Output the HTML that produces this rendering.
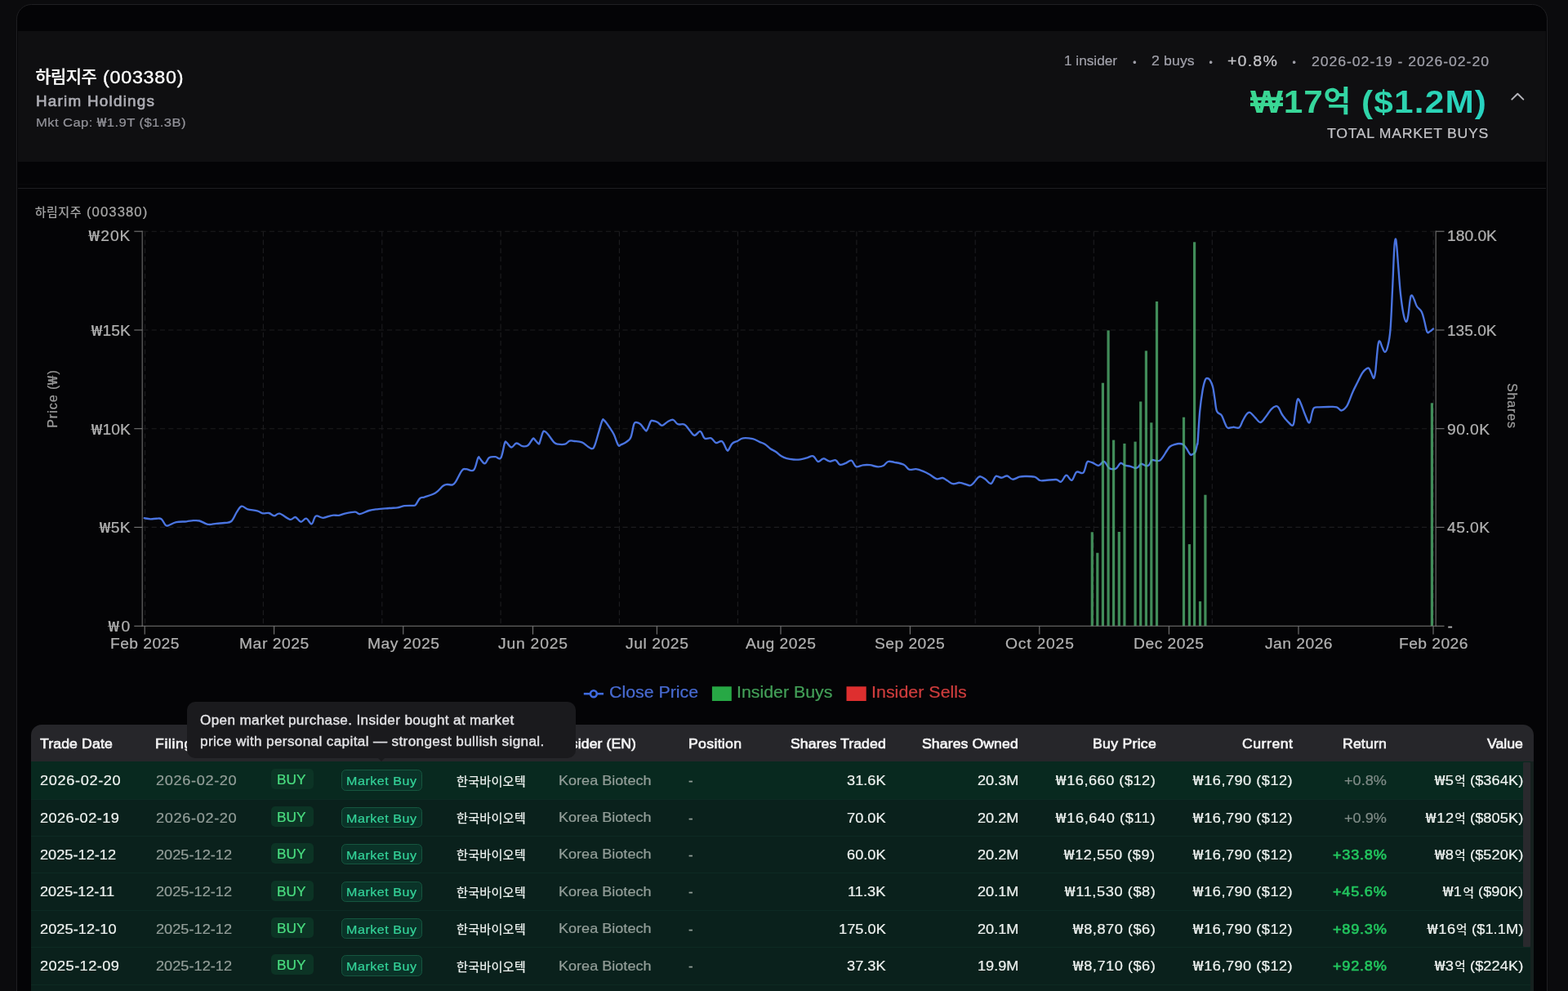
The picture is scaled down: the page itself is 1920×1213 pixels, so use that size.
<!DOCTYPE html>
<html lang="ko">
<head>
<meta charset="utf-8">
<title>하림지주 (003380) — Harim Holdings insider trades</title>
<style>
:root{--kr:"Noto Sans CJK KR","NanumGothic",sans-serif}
*{box-sizing:border-box;margin:0;padding:0}
html,body{width:1920px;height:1213px;overflow:hidden;background:#0b0b0d}
body{position:relative;font-family:"Liberation Sans","Noto Sans CJK KR",sans-serif;-webkit-font-smoothing:antialiased}
.card{position:absolute;left:20.3px;top:4.5px;width:1874.3px;height:1400px;border:1.4px solid #1f1f22;border-radius:18.5px;background:#040406}
.band{position:absolute;left:21.7px;top:38.4px;width:1871.5px;height:160px;background:#0f0f11}
.rule{position:absolute;left:21.7px;top:230px;width:1871.5px;height:1px;background:#1e1e21}
.rule2{position:absolute;left:21.7px;top:225px;width:1871.5px;height:1px;background:#08080a}
.chart{position:absolute;left:0;top:0}
.t{position:absolute;white-space:pre;line-height:1;-webkit-text-stroke:0.22px currentColor;transform-origin:0 0}
.w{font-family:var(--kr);display:inline-block;transform:scaleX(1.26);margin:0 .072em}
.txt{position:absolute;left:0;top:0;width:1920px;height:1213px;will-change:transform}
.chev{position:absolute;left:1846px;top:108px}
.g1,.g2,.g3{-webkit-background-clip:text;background-clip:text;-webkit-text-fill-color:transparent;padding:8px 0;margin-top:-8px}
.g1{background-image:linear-gradient(90deg,#3bd891,#35d69d)}
.g2{background-image:linear-gradient(90deg,#35d69d,#31d5a6)}
.g3{background-image:linear-gradient(90deg,#30d5a8,#27d3c2)}
.tbl{position:absolute;left:38.2px;top:887.2px;width:1839.4px;height:400px;border-radius:13px 13px 0 0;background:#26262a;overflow:hidden}
.row{position:absolute;left:0;width:100%;height:45.4px;background:#0a211c;border-top:1px solid #0d2a23}
.row.r0{background:#08291f;border-top:0}
.sb{position:absolute;left:1865.4px;top:933px;width:8.4px;height:226.4px;background:#29292d;border-radius:1px}
.edge{position:absolute;left:1873.8px;top:932.2px;width:3.8px;height:300px;background:#16211f}
.bb{position:absolute;left:331.6px;width:52px;height:25px;border-radius:5px;background:#0c3425}
.mb{position:absolute;left:418px;width:99.4px;height:25.2px;border-radius:5.5px;background:#0a3328;border:1.1px solid #15563f}
.tip{position:absolute;left:228.8px;top:858.9px;width:476.4px;height:68.8px;border-radius:10px;background:#1a1a1d}
.tip:after{content:"";position:absolute;left:233.2px;top:68.6px;border:5.4px solid transparent;border-top:5.6px solid #1a1a1d;border-bottom:0}
</style>
</head>
<body>
<div class="card"></div>
<div class="band"></div>
<div class="rule2"></div>
<div class="rule"></div>
<svg class="chart" width="1920" height="860" viewBox="0 0 1920 860">
<g stroke="#1c1c1f" stroke-width="1.15" stroke-dasharray="6.2 4.1" fill="none">
<path d="M175.3,283.2H1757.2"/>
<path d="M175.3,404.0H1757.2"/>
<path d="M175.3,524.7H1757.2"/>
<path d="M175.3,645.4H1757.2"/>
<path d="M177.6,283.2V766.3"/>
<path d="M322.4,283.2V766.3"/>
<path d="M467.8,283.2V766.3"/>
<path d="M613.1,283.2V766.3"/>
<path d="M758.4,283.2V766.3"/>
<path d="M903.4,283.2V766.3"/>
<path d="M1048.9,283.2V766.3"/>
<path d="M1194.2,283.2V766.3"/>
<path d="M1339.3,283.2V766.3"/>
<path d="M1484.3,283.2V766.3"/>
<path d="M1755.2,283.2V766.3"/>
</g>
<path d="M176.7,634.2C178.1,634.4 181.4,635.2 184.2,635.3C186.9,635.4 189.3,634.7 191.7,634.7C194.1,634.7 195.5,633.9 197.5,635.3C199.5,636.7 201.0,641.0 202.5,642.5C204.0,644.0 203.4,643.9 205.8,643.3C208.2,642.7 211.7,640.1 215.8,639.2C219.9,638.3 224.5,638.7 228.3,638.3C232.1,637.9 233.8,637.3 236.7,637.2C239.6,637.1 241.4,636.8 244.2,637.5C246.9,638.2 249.4,640.0 251.7,640.8C254.0,641.6 254.3,642.0 256.7,642.0C259.1,642.0 261.6,641.2 265.0,640.8C268.4,640.4 271.6,640.5 275.0,640.0C278.4,639.5 280.6,640.4 283.3,638.0C286.1,635.6 287.7,630.1 290.0,626.7C292.3,623.3 293.4,620.3 295.8,619.7C298.2,619.1 299.8,622.3 303.3,623.3C306.8,624.3 311.6,624.4 315.0,625.3C318.4,626.2 319.1,627.8 321.7,628.3C324.3,628.8 326.6,627.5 329.2,628.0C331.8,628.5 333.4,631.2 335.8,631.3C338.2,631.4 339.0,627.9 342.5,628.7C346.0,629.5 351.5,635.0 355.0,635.8C358.5,636.6 359.3,632.5 361.7,633.0C364.1,633.5 365.9,638.4 368.3,638.7C370.7,639.0 372.5,634.2 375.0,634.7C377.5,635.2 379.6,641.8 381.7,641.3C383.8,640.8 384.1,633.1 386.7,631.7C389.3,630.3 392.1,634.0 395.8,633.8C399.5,633.6 403.2,631.3 406.7,630.8C410.2,630.2 412.0,631.3 415.0,630.8C418.0,630.3 419.6,629.1 423.3,628.3C427.0,627.5 431.8,626.5 435.0,626.7C438.2,626.9 437.7,629.5 440.8,629.2C443.9,628.9 447.9,626.1 451.7,625.0C455.5,623.9 457.1,623.8 461.7,623.3C466.3,622.8 472.1,622.4 476.7,622.0C481.3,621.6 483.3,621.8 486.7,621.3C490.1,620.8 491.3,619.7 495.0,619.2C498.7,618.7 504.1,619.1 506.7,618.8C509.3,618.5 507.8,619.1 509.2,617.5C510.6,615.9 512.2,611.7 514.2,610.0C516.2,608.3 516.5,609.5 520.0,608.3C523.5,607.1 529.2,605.8 533.3,603.3C537.4,600.8 539.9,596.6 542.5,594.7C545.1,592.8 545.4,593.3 547.5,593.0C549.6,592.7 552.2,594.0 554.2,593.3C556.2,592.6 556.2,592.4 558.3,589.2C560.4,586.0 563.5,578.5 565.8,575.8C568.1,573.0 568.2,574.3 570.8,574.2C573.4,574.1 577.3,577.8 580.0,575.3C582.7,572.8 583.9,563.1 585.3,560.5C586.7,557.9 586.2,560.0 587.5,561.2C588.8,562.4 591.1,566.1 592.5,567.0C593.9,567.9 593.8,567.6 595.0,566.3C596.2,565.0 597.1,561.3 599.2,560.0C601.3,558.7 604.1,559.1 606.7,559.2C609.3,559.3 611.2,563.4 613.3,560.3C615.4,557.2 616.7,545.9 618.0,542.5C619.3,539.1 618.8,540.8 620.3,541.7C621.8,542.6 624.1,547.4 626.3,547.5C628.5,547.6 630.0,542.7 632.5,542.5C635.0,542.3 637.4,545.7 640.0,546.2C642.6,546.7 644.4,546.7 646.7,545.0C649.0,543.3 651.0,538.2 652.5,537.0C654.0,535.8 653.8,537.2 655.0,538.3C656.2,539.4 658.1,542.4 659.2,543.0C660.3,543.6 659.8,544.2 660.8,541.7C661.8,539.2 663.5,531.7 664.7,529.2C665.9,526.7 666.2,527.7 667.5,528.3C668.8,528.9 669.7,530.1 671.7,532.5C673.7,534.9 676.2,539.2 678.3,541.3C680.4,543.4 680.8,543.3 683.3,543.7C685.8,544.1 689.1,544.4 691.7,543.7C694.3,543.0 695.4,540.4 697.5,539.7C699.6,539.0 700.5,539.7 703.3,540.0C706.0,540.3 709.4,540.1 712.5,541.3C715.6,542.5 717.7,545.3 720.0,546.7C722.3,548.1 723.5,549.5 725.0,549.2C726.5,548.9 726.8,548.8 728.3,545.0C729.8,541.2 731.6,533.9 733.3,528.3C735.0,522.7 736.3,517.2 737.5,514.7C738.7,512.2 738.3,513.1 740.0,514.7C741.7,516.4 744.6,520.6 746.7,523.7C748.8,526.8 749.8,527.9 751.7,531.7C753.6,535.6 755.3,542.4 757.0,544.7C758.7,547.0 758.7,545.1 760.8,544.2C762.9,543.3 766.2,541.7 768.3,540.0C770.4,538.3 771.0,538.8 772.5,535.0C774.0,531.2 775.1,522.5 776.3,519.2C777.5,515.9 777.8,517.0 779.2,517.0C780.6,517.0 782.2,517.4 784.2,519.2C786.2,521.0 788.8,525.5 790.3,526.7C791.8,527.9 791.3,527.8 792.5,525.8C793.7,523.8 795.5,517.8 796.7,515.8C797.9,513.8 797.7,514.8 799.2,515.0C800.7,515.2 802.9,515.6 805.0,516.7C807.1,517.8 808.5,520.9 810.8,520.8C813.1,520.7 815.0,517.6 817.5,516.3C820.0,515.0 821.9,513.3 824.2,513.8C826.5,514.3 827.4,518.1 830.0,519.2C832.6,520.3 835.5,518.2 838.3,519.7C841.0,521.2 842.8,525.1 845.0,527.5C847.2,529.9 848.2,532.9 850.3,533.0C852.4,533.1 855.1,528.5 856.7,528.0C858.3,527.5 858.0,528.4 859.2,530.0C860.4,531.6 860.9,535.5 863.0,536.7C865.1,537.9 868.3,535.3 870.8,536.3C873.3,537.3 874.2,541.3 876.7,542.0C879.2,542.7 881.8,538.7 884.2,540.3C886.6,541.9 888.5,549.0 890.0,550.8C891.5,552.6 891.3,551.5 892.5,550.0C893.7,548.5 894.7,544.7 896.7,542.8C898.7,540.9 900.9,540.9 903.3,539.7C905.7,538.5 906.6,536.8 910.0,536.3C913.4,535.8 918.0,536.4 921.7,537.2C925.4,538.0 927.2,539.6 930.0,540.8C932.8,542.0 934.3,542.3 936.7,543.8C939.1,545.3 940.9,547.5 943.3,549.2C945.7,550.9 947.5,551.3 950.0,553.0C952.5,554.7 954.3,556.8 956.7,558.3C959.1,559.8 960.5,560.4 963.3,561.2C966.0,562.0 968.6,562.3 971.7,562.5C974.8,562.7 977.0,562.7 980.0,562.3C983.0,561.9 985.4,561.0 988.3,560.3C991.2,559.6 993.3,557.4 995.8,558.3C998.3,559.2 999.4,564.5 1001.7,565.0C1004.0,565.5 1005.7,561.4 1008.3,561.3C1010.9,561.2 1013.0,564.3 1015.8,564.7C1018.5,565.1 1021.0,562.6 1023.3,563.3C1025.6,564.0 1026.2,568.0 1028.3,568.7C1030.4,569.4 1032.4,568.1 1035.0,567.2C1037.6,566.3 1040.1,563.0 1042.5,563.7C1044.9,564.4 1045.7,570.2 1048.3,571.2C1050.9,572.2 1053.6,569.7 1056.7,569.3C1059.8,568.9 1061.6,568.8 1065.0,569.2C1068.4,569.6 1071.9,571.2 1075.0,571.3C1078.1,571.4 1079.4,571.2 1081.7,570.0C1084.0,568.8 1085.1,565.8 1087.5,565.0C1089.9,564.2 1091.5,565.1 1095.0,565.8C1098.5,566.5 1103.3,567.1 1106.7,568.7C1110.1,570.3 1110.5,573.7 1113.3,574.7C1116.0,575.7 1118.6,573.8 1121.7,574.2C1124.8,574.6 1127.0,575.5 1130.0,576.7C1133.0,577.9 1135.2,579.1 1138.3,580.8C1141.4,582.5 1143.8,585.4 1146.7,586.2C1149.6,587.0 1151.8,584.6 1154.2,585.0C1156.6,585.4 1157.7,587.0 1160.0,588.3C1162.3,589.6 1164.0,591.7 1166.7,592.2C1169.5,592.7 1172.2,590.7 1175.0,590.8C1177.8,590.9 1179.4,591.9 1181.7,592.5C1184.0,593.1 1185.7,594.4 1187.5,594.3C1189.3,594.2 1189.9,593.5 1191.7,591.7C1193.5,589.9 1195.8,586.2 1197.5,584.7C1199.2,583.2 1199.1,582.9 1200.8,583.3C1202.5,583.7 1204.4,585.1 1206.7,586.7C1209.0,588.3 1211.2,592.5 1213.3,592.0C1215.4,591.5 1216.9,585.9 1218.3,584.2C1219.7,582.5 1219.3,582.7 1220.8,582.8C1222.3,582.9 1224.4,584.8 1226.7,584.7C1229.0,584.6 1230.9,582.1 1233.3,582.5C1235.7,582.9 1237.2,586.5 1240.0,586.7C1242.8,586.9 1245.5,584.4 1248.3,583.7C1251.0,583.0 1251.6,583.0 1255.0,583.0C1258.4,583.0 1263.3,582.8 1266.7,583.7C1270.1,584.6 1270.9,587.2 1273.3,588.0C1275.7,588.8 1276.3,588.2 1280.0,588.0C1283.7,587.8 1289.8,586.7 1293.3,587.0C1296.8,587.3 1297.2,590.5 1299.2,589.7C1301.2,588.9 1302.8,584.2 1304.2,582.8C1305.6,581.4 1305.2,581.1 1306.7,582.0C1308.2,582.9 1310.4,588.6 1312.5,587.8C1314.6,587.0 1315.8,579.5 1318.3,577.8C1320.8,576.1 1324.1,580.8 1326.4,578.7C1328.7,576.6 1329.5,568.6 1330.9,566.1C1332.3,563.6 1332.5,565.0 1333.9,565.1C1335.3,565.2 1336.7,565.9 1338.8,566.8C1340.9,567.7 1343.0,570.1 1345.2,569.8C1347.4,569.5 1349.2,566.0 1350.7,565.3C1352.2,564.6 1351.8,564.4 1353.2,565.8C1354.6,567.2 1356.2,571.5 1358.1,573.0C1360.0,574.5 1361.9,574.2 1363.5,574.2C1365.1,574.2 1365.5,574.5 1367.0,573.2C1368.5,571.9 1370.2,568.4 1371.5,567.3C1372.8,566.2 1372.8,566.9 1373.9,567.3C1375.0,567.7 1375.5,569.0 1377.4,569.6C1379.3,570.2 1381.9,570.2 1384.3,570.8C1386.7,571.4 1388.5,572.9 1390.3,573.0C1392.1,573.1 1392.9,572.2 1394.2,571.2C1395.5,570.2 1395.5,568.0 1397.2,567.8C1398.9,567.6 1401.8,570.1 1403.6,570.3C1405.4,570.5 1405.8,570.1 1407.1,568.8C1408.4,567.5 1409.1,564.2 1410.5,563.3C1411.9,562.4 1413.3,563.7 1415.0,563.8C1416.7,563.9 1418.3,564.6 1419.9,563.8C1421.5,563.0 1422.2,561.7 1423.9,559.4C1425.6,557.1 1427.3,553.9 1428.9,551.5C1430.5,549.1 1431.0,547.9 1432.8,546.5C1434.6,545.1 1436.7,544.6 1438.7,544.0C1440.7,543.4 1441.9,543.0 1443.7,543.0C1445.5,543.0 1447.0,543.0 1448.6,544.0C1450.2,545.0 1451.0,546.3 1452.6,548.5C1454.2,550.7 1455.8,554.5 1457.1,555.9C1458.4,557.3 1458.3,556.9 1459.5,556.4C1460.7,555.9 1462.3,555.8 1463.5,553.4C1464.7,551.0 1465.4,546.0 1466.0,543.5C1466.6,541.0 1466.1,547.4 1466.7,540.0C1467.3,532.6 1468.1,514.6 1469.2,503.3C1470.3,492.0 1471.3,485.3 1472.5,478.3C1473.7,471.3 1474.7,467.8 1475.8,465.0C1476.9,462.2 1477.2,462.9 1478.3,463.0C1479.4,463.1 1480.5,463.4 1481.7,465.3C1482.9,467.2 1483.9,469.1 1485.0,473.3C1486.1,477.5 1486.6,482.8 1487.5,488.3C1488.4,493.8 1488.5,499.6 1490.0,503.3C1491.5,507.0 1494.0,505.6 1495.8,508.3C1497.6,511.1 1498.6,515.5 1500.0,518.3C1501.4,521.1 1501.5,523.0 1503.3,523.8C1505.1,524.6 1507.4,522.9 1510.0,522.8C1512.6,522.7 1515.4,524.7 1517.5,523.3C1519.6,521.9 1520.0,518.0 1521.7,515.0C1523.4,512.0 1525.0,508.5 1526.7,506.7C1528.4,504.9 1529.0,504.2 1530.8,505.0C1532.6,505.8 1534.4,508.6 1536.7,510.8C1539.0,513.0 1540.9,517.1 1543.3,517.0C1545.7,516.9 1547.5,513.0 1550.0,510.0C1552.5,507.0 1554.4,503.1 1556.7,500.8C1559.0,498.5 1560.8,497.5 1562.5,497.2C1564.2,496.9 1564.4,497.3 1565.8,499.2C1567.2,501.1 1568.0,504.5 1570.0,507.5C1572.0,510.5 1574.3,513.5 1576.7,515.8C1579.1,518.1 1581.6,522.0 1583.3,520.3C1585.0,518.6 1584.9,512.1 1585.8,506.7C1586.7,501.3 1587.5,494.1 1588.3,490.8C1589.1,487.5 1589.4,488.0 1590.3,488.8C1591.2,489.6 1591.8,491.4 1593.3,495.0C1594.8,498.6 1596.5,504.2 1598.3,508.3C1600.1,512.4 1601.8,518.1 1603.3,517.5C1604.8,516.9 1605.6,508.4 1606.7,505.0C1607.8,501.6 1607.7,500.4 1609.2,499.2C1610.7,498.0 1611.8,498.5 1615.0,498.3C1618.2,498.1 1622.7,498.0 1626.7,498.0C1630.7,498.0 1633.8,497.5 1636.7,498.3C1639.6,499.1 1640.4,502.5 1642.5,502.5C1644.6,502.5 1646.6,500.3 1648.3,498.3C1650.0,496.3 1650.2,495.2 1651.7,491.7C1653.2,488.2 1654.7,483.6 1656.7,479.2C1658.7,474.8 1660.4,471.7 1662.5,467.5C1664.6,463.3 1666.3,459.3 1668.3,456.3C1670.3,453.3 1671.8,452.3 1673.3,451.3C1674.8,450.3 1675.2,449.8 1676.3,450.8C1677.4,451.8 1678.1,454.5 1679.2,456.7C1680.3,458.9 1681.3,463.3 1682.2,463.0C1683.1,462.7 1683.7,458.0 1684.2,455.0C1684.7,452.0 1684.4,452.8 1685.0,446.7C1685.6,440.6 1686.6,427.0 1687.5,421.7C1688.4,416.4 1688.8,417.4 1689.7,418.0C1690.6,418.6 1691.4,422.7 1692.5,425.0C1693.6,427.3 1694.6,430.9 1695.8,430.8C1697.0,430.7 1698.0,429.2 1699.2,424.2C1700.4,419.2 1701.4,416.0 1702.5,403.3C1703.6,390.6 1704.1,373.0 1705.0,355.0C1705.9,337.0 1706.5,316.5 1707.2,305.0C1707.9,293.5 1708.1,293.1 1708.7,292.5C1709.3,291.9 1709.6,294.8 1710.3,301.7C1711.0,308.6 1711.6,319.3 1712.5,330.0C1713.4,340.7 1713.9,350.2 1715.0,360.0C1716.1,369.8 1717.1,377.1 1718.3,383.3C1719.5,389.5 1720.6,393.1 1721.7,393.7C1722.8,394.3 1723.3,391.6 1724.2,386.7C1725.1,381.8 1725.9,371.4 1726.7,366.7C1727.5,362.0 1727.8,361.3 1728.7,361.3C1729.6,361.3 1730.5,364.2 1731.7,366.7C1732.9,369.2 1733.3,372.2 1735.0,375.0C1736.7,377.8 1739.1,378.3 1740.8,381.7C1742.5,385.1 1743.0,388.8 1744.2,393.3C1745.4,397.8 1746.3,404.0 1747.5,406.3C1748.7,408.6 1749.4,406.5 1750.8,405.8C1752.2,405.1 1754.2,403.1 1755.0,402.5" fill="none" stroke="#4a74e0" stroke-width="2.35" stroke-linejoin="round" stroke-linecap="round"/>
<g fill="#56b975" fill-opacity="0.75">
<rect x="1335.7" y="651.3" width="3.2" height="115.0"/>
<rect x="1342.2" y="676.7" width="3.2" height="89.6"/>
<rect x="1348.8" y="468.7" width="3.2" height="297.6"/>
<rect x="1355.5" y="404.4" width="3.2" height="361.9"/>
<rect x="1362.0" y="538.6" width="3.2" height="227.7"/>
<rect x="1368.7" y="651.0" width="3.2" height="115.3"/>
<rect x="1375.3" y="542.9" width="3.2" height="223.4"/>
<rect x="1388.5" y="540.6" width="3.2" height="225.7"/>
<rect x="1395.1" y="491.5" width="3.2" height="274.8"/>
<rect x="1401.8" y="429.4" width="3.2" height="336.9"/>
<rect x="1408.2" y="517.3" width="3.2" height="249.0"/>
<rect x="1414.9" y="369.0" width="3.2" height="397.3"/>
<rect x="1447.9" y="510.7" width="3.2" height="255.6"/>
<rect x="1454.8" y="666.1" width="3.2" height="100.2"/>
<rect x="1461.0" y="296.3" width="3.2" height="470.0"/>
<rect x="1467.9" y="736.1" width="3.2" height="30.2"/>
<rect x="1474.3" y="605.7" width="3.2" height="160.6"/>
<rect x="1751.8" y="493.3" width="3.2" height="273.0"/>
</g>
<g stroke="#505050" stroke-width="1.6" fill="none"><path d="M174.3,282.59999999999997V766.9"/><path d="M1758.2,282.59999999999997V766.9"/></g>
<g stroke="#787878" stroke-width="1.1" fill="none">
<path d="M173.70000000000002,766.3H1758.8"/>
<path d="M164.3,283.2H174.3"/><path d="M1758.2,283.2H1768.5"/>
<path d="M164.3,404.0H174.3"/><path d="M1758.2,404.0H1768.5"/>
<path d="M164.3,524.7H174.3"/><path d="M1758.2,524.7H1768.5"/>
<path d="M164.3,645.4H174.3"/><path d="M1758.2,645.4H1768.5"/>
<path d="M164.3,766.3H174.3"/><path d="M1758.2,766.3H1768.5"/>
<path d="M177.2,766.3V776.5999999999999"/>
<path d="M335.6,766.3V776.5999999999999"/>
<path d="M493.75,766.3V776.5999999999999"/>
<path d="M652.5,766.3V776.5999999999999"/>
<path d="M804.4,766.3V776.5999999999999"/>
<path d="M956,766.3V776.5999999999999"/>
<path d="M1114.4,766.3V776.5999999999999"/>
<path d="M1272.8,766.3V776.5999999999999"/>
<path d="M1431.4,766.3V776.5999999999999"/>
<path d="M1590,766.3V776.5999999999999"/>
<path d="M1755,766.3V776.5999999999999"/>
</g>
<path d="M714.8,849.2H739" stroke="#3f6be0" stroke-width="2.6" fill="none"/><circle cx="726.9" cy="849.2" r="3.9" fill="#050507" stroke="#3f6be0" stroke-width="2.6"/>
<rect x="871.9" y="840.3" width="23.9" height="17.7" fill="#27a845"/>
<rect x="1036.5" y="840.3" width="24.2" height="17.7" fill="#de2f2f"/>
</svg>
<svg class="chev" width="24" height="24" viewBox="0 0 24 24"><path d="M5.3,13.6 L12.3,6.7 L19.3,13.6" fill="none" stroke="#b6b6bc" stroke-width="2" stroke-linecap="round" stroke-linejoin="round"/></svg>
<div class="tbl">
<div class="row r0" style="top:45.0px"></div><div class="row" style="top:90.4px"></div><div class="row" style="top:135.8px"></div><div class="row" style="top:181.2px"></div><div class="row" style="top:226.6px"></div><div class="row" style="top:272.0px"></div><div class="row" style="top:317.4px"></div>
</div>
<div class="edge"></div>
<div class="sb"></div>
<div class="bb" style="top:941.4px"></div><div class="mb" style="top:942.4px"></div><div class="bb" style="top:986.8px"></div><div class="mb" style="top:987.8px"></div><div class="bb" style="top:1032.2px"></div><div class="mb" style="top:1033.2px"></div><div class="bb" style="top:1077.6px"></div><div class="mb" style="top:1078.6px"></div><div class="bb" style="top:1123.0px"></div><div class="mb" style="top:1124.0px"></div><div class="bb" style="top:1168.4px"></div><div class="mb" style="top:1169.4px"></div><div class="bb" style="top:1213.8px"></div><div class="mb" style="top:1214.8px"></div>
<header class="txt">
<span class="t" style="font-size:21px;color:#ffffff;letter-spacing:-0.54px;font-weight:500;font-family:var(--kr);left:43.27px;top:81.82px;">하림지주</span>
<span class="t" style="font-size:21.8px;color:#ffffff;letter-spacing:0.68px;-webkit-text-stroke:0.35px #fff;left:125.90px;top:83.54px;transform:scaleX(1.070);">(003380)</span>
<span class="t" style="font-size:17.6px;color:#adadb4;letter-spacing:1.17px;-webkit-text-stroke:0.62px currentColor;left:43.84px;top:116.00px;transform:scaleX(1.070);">Harim Holdings</span>
<span class="t" style="font-size:15.5px;color:#93939a;letter-spacing:0.40px;left:44.00px;top:141.48px;transform:scaleX(1.070);">Mkt Cap: <span class="w">₩</span>1.9T ($1.3B)</span>
<span class="t" style="font-size:16.5px;color:#a1a1aa;left:1303.23px;top:66.23px;transform:scaleX(1.043);">1 insider</span>
<span class="t" style="font-size:16.5px;color:#a1a1aa;letter-spacing:0.12px;left:1409.77px;top:66.23px;transform:scaleX(1.070);">2 buys</span>
<span class="t" style="font-size:18.3px;color:#c6c6ca;letter-spacing:1.12px;left:1503.16px;top:65.51px;transform:scaleX(1.070);">+0.8%</span>
<span class="t" style="font-size:16.5px;color:#a1a1aa;letter-spacing:0.88px;left:1605.72px;top:66.83px;transform:scaleX(1.070);">2026-02-19 - 2026-02-20</span>
<span class="t" style="font-size:12px;color:#a1a1aa;left:1387.24px;top:70.84px;">•</span>
<span class="t" style="font-size:12px;color:#a1a1aa;left:1480.54px;top:70.84px;">•</span>
<span class="t" style="font-size:12px;color:#a1a1aa;left:1582.54px;top:70.84px;">•</span>
<span class="t g1" style="font-size:39.6px;color:#38d796;letter-spacing:0.77px;font-weight:700;-webkit-text-stroke:0;left:1530.53px;top:104.77px;transform:scaleX(1.070);">₩17</span>
<span class="t g2" style="font-size:36.5px;color:#32d6a3;font-weight:700;-webkit-text-stroke:0;font-family:var(--kr);left:1620.50px;top:103.88px;">억</span>
<span class="t g3" style="font-size:39.6px;color:#2cd4b4;letter-spacing:1.10px;font-weight:700;-webkit-text-stroke:0;left:1667.33px;top:104.77px;transform:scaleX(1.070);">($1.2M)</span>
<span class="t" style="font-size:16.5px;color:#c4c4c8;letter-spacing:0.67px;left:1624.77px;top:155.13px;transform:scaleX(1.070);">TOTAL MARKET BUYS</span>
</header>
<section class="txt" aria-label="Price chart labels">
<span class="t" style="font-size:15px;color:#a8a8a8;letter-spacing:0.50px;font-family:var(--kr);left:42.75px;top:250.80px;">하림지주</span>
<span class="t" style="font-size:15.6px;color:#a8a8a8;letter-spacing:0.99px;left:105.90px;top:252.09px;transform:scaleX(1.070);">(003380)</span>
<span class="t" style="font-size:18px;color:#b2b2b2;letter-spacing:0.85px;left:108.82px;top:278.06px;transform:scaleX(1.070);"><span class="w">₩</span>20K</span>
<span class="t" style="font-size:18px;color:#b2b2b2;letter-spacing:0.01px;left:111.52px;top:394.06px;transform:scaleX(1.070);"><span class="w">₩</span>15K</span>
<span class="t" style="font-size:18px;color:#b2b2b2;letter-spacing:0.01px;left:111.52px;top:515.06px;transform:scaleX(1.070);"><span class="w">₩</span>10K</span>
<span class="t" style="font-size:18px;color:#b2b2b2;letter-spacing:0.25px;left:121.72px;top:635.06px;transform:scaleX(1.070);"><span class="w">₩</span>5K</span>
<span class="t" style="font-size:18px;color:#b2b2b2;letter-spacing:1.96px;left:133.02px;top:756.06px;transform:scaleX(1.070);"><span class="w">₩</span>0</span>
<span class="t" style="font-size:18px;color:#b2b2b2;left:1772.02px;top:280.36px;transform:scaleX(1.068);">180.0K</span>
<span class="t" style="font-size:18px;color:#b2b2b2;left:1772.03px;top:395.76px;transform:scaleX(1.061);">135.0K</span>
<span class="t" style="font-size:18px;color:#b2b2b2;letter-spacing:0.42px;left:1772.02px;top:516.76px;transform:scaleX(1.070);">90.0K</span>
<span class="t" style="font-size:18px;color:#b2b2b2;letter-spacing:0.42px;left:1772.02px;top:636.96px;transform:scaleX(1.070);">45.0K</span>
<span class="t" style="font-size:19px;color:#b2b2b2;left:1772.43px;top:757.21px;">-</span>
<span class="t" style="font-size:18px;color:#b2b2b2;letter-spacing:0.40px;left:134.92px;top:779.46px;transform:scaleX(1.070);">Feb 2025</span>
<span class="t" style="font-size:18px;color:#b2b2b2;letter-spacing:0.53px;left:292.82px;top:779.46px;transform:scaleX(1.070);">Mar 2025</span>
<span class="t" style="font-size:18px;color:#b2b2b2;letter-spacing:0.44px;left:449.72px;top:779.46px;transform:scaleX(1.070);">May 2025</span>
<span class="t" style="font-size:18px;color:#b2b2b2;letter-spacing:0.75px;left:609.97px;top:779.46px;transform:scaleX(1.070);">Jun 2025</span>
<span class="t" style="font-size:18px;color:#b2b2b2;letter-spacing:0.54px;left:765.87px;top:779.46px;transform:scaleX(1.070);">Jul 2025</span>
<span class="t" style="font-size:18px;color:#b2b2b2;letter-spacing:0.46px;left:912.92px;top:779.46px;transform:scaleX(1.070);">Aug 2025</span>
<span class="t" style="font-size:18px;color:#b2b2b2;letter-spacing:0.42px;left:1071.47px;top:779.46px;transform:scaleX(1.070);">Sep 2025</span>
<span class="t" style="font-size:18px;color:#b2b2b2;letter-spacing:0.76px;left:1230.77px;top:779.46px;transform:scaleX(1.070);">Oct 2025</span>
<span class="t" style="font-size:18px;color:#b2b2b2;letter-spacing:0.47px;left:1388.32px;top:779.46px;transform:scaleX(1.070);">Dec 2025</span>
<span class="t" style="font-size:18px;color:#b2b2b2;letter-spacing:0.44px;left:1548.62px;top:779.46px;transform:scaleX(1.070);">Jan 2026</span>
<span class="t" style="font-size:18px;color:#b2b2b2;letter-spacing:0.40px;left:1712.72px;top:779.46px;transform:scaleX(1.070);">Feb 2026</span>
<span class="t" style="font-size:16px;color:#9c9c9c;letter-spacing:1.00px;left:64.0px;top:487.6px;transform-origin:50% 50%;transform:translate(-50%,-50%) rotate(-90deg);">Price (<span class="w">₩</span>)</span>
<span class="t" style="font-size:16px;color:#9c9c9c;letter-spacing:0.85px;left:1850.6px;top:496.8px;transform-origin:50% 50%;transform:translate(-50%,-50%) rotate(90deg);">Shares</span>
<span class="t" style="font-size:20px;color:#486bd2;left:745.76px;top:837.47px;transform:scaleX(1.067);">Close Price</span>
<span class="t" style="font-size:20px;color:#43a058;left:902.36px;top:837.47px;transform:scaleX(1.066);">Insider Buys</span>
<span class="t" style="font-size:20px;color:#cf3d3d;letter-spacing:0.02px;left:1067.36px;top:837.47px;transform:scaleX(1.070);">Insider Sells</span>
</section>
<section class="txt" aria-label="Insider trades table">
<span class="t" style="font-size:16.5px;color:#f4f4f5;letter-spacing:0.11px;-webkit-text-stroke:0.62px currentColor;left:49.47px;top:901.53px;transform:scaleX(1.070);">Trade Date</span>
<span class="t" style="font-size:16.5px;color:#f4f4f5;letter-spacing:0.58px;-webkit-text-stroke:0.62px currentColor;left:190.47px;top:901.53px;transform:scaleX(1.070);">Filing Date</span>
<span class="t" style="font-size:16.5px;color:#f4f4f5;-webkit-text-stroke:0.62px currentColor;left:330.47px;top:901.53px;transform:scaleX(1.063);">Type</span>
<span class="t" style="font-size:16.5px;color:#f4f4f5;letter-spacing:0.19px;-webkit-text-stroke:0.62px currentColor;left:417.47px;top:901.53px;transform:scaleX(1.070);">Category</span>
<span class="t" style="font-size:16.5px;color:#f4f4f5;letter-spacing:0.30px;-webkit-text-stroke:0.62px currentColor;left:558.77px;top:901.53px;transform:scaleX(1.070);">Insider (KR)</span>
<span class="t" style="font-size:16.5px;color:#f4f4f5;letter-spacing:0.07px;-webkit-text-stroke:0.62px currentColor;left:683.77px;top:901.53px;transform:scaleX(1.070);">Insider (EN)</span>
<span class="t" style="font-size:16.5px;color:#f4f4f5;letter-spacing:0.30px;-webkit-text-stroke:0.62px currentColor;left:842.77px;top:901.53px;transform:scaleX(1.070);">Position</span>
<span class="t" style="font-size:16.5px;color:#f4f4f5;letter-spacing:0.07px;-webkit-text-stroke:0.62px currentColor;left:967.77px;top:901.53px;transform:scaleX(1.070);">Shares Traded</span>
<span class="t" style="font-size:16.5px;color:#f4f4f5;letter-spacing:0.08px;-webkit-text-stroke:0.62px currentColor;left:1129.47px;top:901.53px;transform:scaleX(1.070);">Shares Owned</span>
<span class="t" style="font-size:16.5px;color:#f4f4f5;letter-spacing:0.26px;-webkit-text-stroke:0.62px currentColor;left:1337.77px;top:901.53px;transform:scaleX(1.070);">Buy Price</span>
<span class="t" style="font-size:16.5px;color:#f4f4f5;letter-spacing:0.49px;-webkit-text-stroke:0.62px currentColor;left:1521.17px;top:901.53px;transform:scaleX(1.070);">Current</span>
<span class="t" style="font-size:16.5px;color:#f4f4f5;letter-spacing:0.14px;-webkit-text-stroke:0.62px currentColor;left:1644.47px;top:901.53px;transform:scaleX(1.070);">Return</span>
<span class="t" style="font-size:16.5px;color:#f4f4f5;letter-spacing:0.00px;-webkit-text-stroke:0.62px currentColor;left:1821.17px;top:901.53px;transform:scaleX(1.070);">Value</span>
<span class="t" style="font-size:17px;color:#eef2f0;letter-spacing:0.59px;left:49.45px;top:947.21px;transform:scaleX(1.070);">2026-02-20</span>
<span class="t" style="font-size:17px;color:#939e99;letter-spacing:0.59px;left:190.55px;top:947.21px;transform:scaleX(1.070);">2026-02-20</span>
<span class="t" style="font-size:16.5px;color:#4ade80;left:339.48px;top:946.43px;transform:scaleX(1.047);">BUY</span>
<span class="t" style="font-size:15px;color:#34d399;letter-spacing:0.51px;left:424.42px;top:948.10px;transform:scaleX(1.070);">Market Buy</span>
<span class="t" style="font-size:15.2px;color:#eef2f0;letter-spacing:0.17px;font-family:var(--kr);left:559.04px;top:947.62px;">한국바이오텍</span>
<span class="t" style="font-size:17px;color:#939e99;left:683.76px;top:946.61px;transform:scaleX(1.063);">Korea Biotech</span>
<span class="t" style="font-size:17px;color:#939e99;left:842.99px;top:947.21px;">-</span>
<span class="t" style="font-size:17px;color:#eef2f0;letter-spacing:0.02px;left:1036.92px;top:947.21px;transform:scaleX(1.070);">31.6K</span>
<span class="t" style="font-size:17px;color:#eef2f0;left:1196.81px;top:947.21px;transform:scaleX(1.067);">20.3M</span>
<span class="t" style="font-size:17px;color:#eef2f0;letter-spacing:0.46px;left:1292.75px;top:945.21px;transform:scaleX(1.070);"><span class="w">₩</span>16,660 ($12)</span>
<span class="t" style="font-size:17px;color:#eef2f0;letter-spacing:0.45px;left:1461.15px;top:945.21px;transform:scaleX(1.070);"><span class="w">₩</span>16,790 ($12)</span>
<span class="t" style="font-size:17px;color:#7f8b87;left:1646.37px;top:947.21px;transform:scaleX(1.065);">+0.8%</span>
<span class="t" style="font-size:17px;color:#eef2f0;letter-spacing:0.08px;left:1799.61px;top:947.21px;transform:scaleX(1.070);">($364K)</span>
<span class="t" style="font-size:14.6px;color:#eef2f0;font-family:var(--kr);left:1781.16px;top:948.45px;">억</span>
<span class="t" style="font-size:17px;color:#eef2f0;letter-spacing:0.15px;left:1756.94px;top:945.21px;transform:scaleX(1.070);"><span class="w">₩</span>5</span>
<span class="t" style="font-size:17px;color:#eef2f0;letter-spacing:0.39px;left:49.45px;top:992.61px;transform:scaleX(1.070);">2026-02-19</span>
<span class="t" style="font-size:17px;color:#939e99;letter-spacing:0.59px;left:190.55px;top:992.61px;transform:scaleX(1.070);">2026-02-20</span>
<span class="t" style="font-size:16.5px;color:#4ade80;left:339.48px;top:991.83px;transform:scaleX(1.047);">BUY</span>
<span class="t" style="font-size:15px;color:#34d399;letter-spacing:0.51px;left:424.42px;top:993.50px;transform:scaleX(1.070);">Market Buy</span>
<span class="t" style="font-size:15.2px;color:#eef2f0;letter-spacing:0.17px;font-family:var(--kr);left:559.04px;top:993.02px;">한국바이오텍</span>
<span class="t" style="font-size:17px;color:#939e99;left:683.76px;top:992.01px;transform:scaleX(1.063);">Korea Biotech</span>
<span class="t" style="font-size:17px;color:#939e99;left:842.99px;top:992.61px;">-</span>
<span class="t" style="font-size:17px;color:#eef2f0;letter-spacing:0.02px;left:1036.92px;top:992.61px;transform:scaleX(1.070);">70.0K</span>
<span class="t" style="font-size:17px;color:#eef2f0;left:1196.81px;top:992.61px;transform:scaleX(1.067);">20.2M</span>
<span class="t" style="font-size:17px;color:#eef2f0;letter-spacing:0.55px;left:1292.95px;top:990.61px;transform:scaleX(1.070);"><span class="w">₩</span>16,640 ($11)</span>
<span class="t" style="font-size:17px;color:#eef2f0;letter-spacing:0.45px;left:1461.15px;top:990.61px;transform:scaleX(1.070);"><span class="w">₩</span>16,790 ($12)</span>
<span class="t" style="font-size:17px;color:#7f8b87;left:1646.37px;top:992.61px;transform:scaleX(1.065);">+0.9%</span>
<span class="t" style="font-size:17px;color:#eef2f0;letter-spacing:0.08px;left:1799.61px;top:992.61px;transform:scaleX(1.070);">($805K)</span>
<span class="t" style="font-size:14.6px;color:#eef2f0;font-family:var(--kr);left:1781.16px;top:993.85px;">억</span>
<span class="t" style="font-size:17px;color:#eef2f0;letter-spacing:0.50px;left:1745.91px;top:990.61px;transform:scaleX(1.070);"><span class="w">₩</span>12</span>
<span class="t" style="font-size:17px;color:#eef2f0;letter-spacing:0.00px;left:49.45px;top:1038.01px;transform:scaleX(1.070);">2025-12-12</span>
<span class="t" style="font-size:17px;color:#939e99;letter-spacing:0.00px;left:190.55px;top:1038.01px;transform:scaleX(1.070);">2025-12-12</span>
<span class="t" style="font-size:16.5px;color:#4ade80;left:339.48px;top:1037.23px;transform:scaleX(1.047);">BUY</span>
<span class="t" style="font-size:15px;color:#34d399;letter-spacing:0.51px;left:424.42px;top:1038.90px;transform:scaleX(1.070);">Market Buy</span>
<span class="t" style="font-size:15.2px;color:#eef2f0;letter-spacing:0.17px;font-family:var(--kr);left:559.04px;top:1038.42px;">한국바이오텍</span>
<span class="t" style="font-size:17px;color:#939e99;left:683.76px;top:1037.41px;transform:scaleX(1.063);">Korea Biotech</span>
<span class="t" style="font-size:17px;color:#939e99;left:842.99px;top:1038.01px;">-</span>
<span class="t" style="font-size:17px;color:#eef2f0;letter-spacing:0.02px;left:1036.92px;top:1038.01px;transform:scaleX(1.070);">60.0K</span>
<span class="t" style="font-size:17px;color:#eef2f0;left:1196.81px;top:1038.01px;transform:scaleX(1.067);">20.2M</span>
<span class="t" style="font-size:17px;color:#eef2f0;letter-spacing:0.45px;left:1303.45px;top:1036.01px;transform:scaleX(1.070);"><span class="w">₩</span>12,550 ($9)</span>
<span class="t" style="font-size:17px;color:#eef2f0;letter-spacing:0.45px;left:1461.15px;top:1036.01px;transform:scaleX(1.070);"><span class="w">₩</span>16,790 ($12)</span>
<span class="t" style="font-size:17px;color:#22c55e;letter-spacing:0.68px;-webkit-text-stroke:0.62px currentColor;left:1632.38px;top:1038.01px;transform:scaleX(1.070);">+33.8%</span>
<span class="t" style="font-size:17px;color:#eef2f0;letter-spacing:0.08px;left:1799.61px;top:1038.01px;transform:scaleX(1.070);">($520K)</span>
<span class="t" style="font-size:14.6px;color:#eef2f0;font-family:var(--kr);left:1781.16px;top:1039.25px;">억</span>
<span class="t" style="font-size:17px;color:#eef2f0;letter-spacing:0.15px;left:1756.94px;top:1036.01px;transform:scaleX(1.070);"><span class="w">₩</span>8</span>
<span class="t" style="font-size:17px;color:#eef2f0;left:49.46px;top:1083.41px;transform:scaleX(1.063);">2025-12-11</span>
<span class="t" style="font-size:17px;color:#939e99;letter-spacing:0.00px;left:190.55px;top:1083.41px;transform:scaleX(1.070);">2025-12-12</span>
<span class="t" style="font-size:16.5px;color:#4ade80;left:339.48px;top:1082.63px;transform:scaleX(1.047);">BUY</span>
<span class="t" style="font-size:15px;color:#34d399;letter-spacing:0.51px;left:424.42px;top:1084.30px;transform:scaleX(1.070);">Market Buy</span>
<span class="t" style="font-size:15.2px;color:#eef2f0;letter-spacing:0.17px;font-family:var(--kr);left:559.04px;top:1083.82px;">한국바이오텍</span>
<span class="t" style="font-size:17px;color:#939e99;left:683.76px;top:1082.81px;transform:scaleX(1.063);">Korea Biotech</span>
<span class="t" style="font-size:17px;color:#939e99;left:842.99px;top:1083.41px;">-</span>
<span class="t" style="font-size:17px;color:#eef2f0;letter-spacing:0.04px;left:1038.18px;top:1083.41px;transform:scaleX(1.070);">11.3K</span>
<span class="t" style="font-size:17px;color:#eef2f0;left:1196.81px;top:1083.41px;transform:scaleX(1.067);">20.1M</span>
<span class="t" style="font-size:17px;color:#eef2f0;letter-spacing:0.55px;left:1303.65px;top:1081.41px;transform:scaleX(1.070);"><span class="w">₩</span>11,530 ($8)</span>
<span class="t" style="font-size:17px;color:#eef2f0;letter-spacing:0.45px;left:1461.15px;top:1081.41px;transform:scaleX(1.070);"><span class="w">₩</span>16,790 ($12)</span>
<span class="t" style="font-size:17px;color:#22c55e;letter-spacing:0.68px;-webkit-text-stroke:0.62px currentColor;left:1632.38px;top:1083.41px;transform:scaleX(1.070);">+45.6%</span>
<span class="t" style="font-size:17px;color:#eef2f0;letter-spacing:0.07px;left:1809.84px;top:1083.41px;transform:scaleX(1.070);">($90K)</span>
<span class="t" style="font-size:14.6px;color:#eef2f0;font-family:var(--kr);left:1791.39px;top:1084.65px;">억</span>
<span class="t" style="font-size:17px;color:#eef2f0;letter-spacing:0.15px;left:1767.18px;top:1081.41px;transform:scaleX(1.070);"><span class="w">₩</span>1</span>
<span class="t" style="font-size:17px;color:#eef2f0;letter-spacing:0.05px;left:49.45px;top:1128.81px;transform:scaleX(1.070);">2025-12-10</span>
<span class="t" style="font-size:17px;color:#939e99;letter-spacing:0.00px;left:190.55px;top:1128.81px;transform:scaleX(1.070);">2025-12-12</span>
<span class="t" style="font-size:16.5px;color:#4ade80;left:339.48px;top:1128.03px;transform:scaleX(1.047);">BUY</span>
<span class="t" style="font-size:15px;color:#34d399;letter-spacing:0.51px;left:424.42px;top:1129.70px;transform:scaleX(1.070);">Market Buy</span>
<span class="t" style="font-size:15.2px;color:#eef2f0;letter-spacing:0.17px;font-family:var(--kr);left:559.04px;top:1129.22px;">한국바이오텍</span>
<span class="t" style="font-size:17px;color:#939e99;left:683.76px;top:1128.21px;transform:scaleX(1.063);">Korea Biotech</span>
<span class="t" style="font-size:17px;color:#939e99;left:842.99px;top:1128.81px;">-</span>
<span class="t" style="font-size:17px;color:#eef2f0;letter-spacing:0.04px;left:1026.68px;top:1128.81px;transform:scaleX(1.070);">175.0K</span>
<span class="t" style="font-size:17px;color:#eef2f0;left:1196.81px;top:1128.81px;transform:scaleX(1.067);">20.1M</span>
<span class="t" style="font-size:17px;color:#eef2f0;letter-spacing:0.48px;left:1313.75px;top:1126.81px;transform:scaleX(1.070);"><span class="w">₩</span>8,870 ($6)</span>
<span class="t" style="font-size:17px;color:#eef2f0;letter-spacing:0.45px;left:1461.15px;top:1126.81px;transform:scaleX(1.070);"><span class="w">₩</span>16,790 ($12)</span>
<span class="t" style="font-size:17px;color:#22c55e;letter-spacing:0.68px;-webkit-text-stroke:0.62px currentColor;left:1632.38px;top:1128.81px;transform:scaleX(1.070);">+89.3%</span>
<span class="t" style="font-size:17px;color:#eef2f0;letter-spacing:0.10px;left:1801.52px;top:1128.81px;transform:scaleX(1.070);">($1.1M)</span>
<span class="t" style="font-size:14.6px;color:#eef2f0;font-family:var(--kr);left:1783.06px;top:1130.05px;">억</span>
<span class="t" style="font-size:17px;color:#eef2f0;letter-spacing:0.50px;left:1747.82px;top:1126.81px;transform:scaleX(1.070);"><span class="w">₩</span>16</span>
<span class="t" style="font-size:17px;color:#eef2f0;letter-spacing:0.39px;left:49.45px;top:1174.21px;transform:scaleX(1.070);">2025-12-09</span>
<span class="t" style="font-size:17px;color:#939e99;letter-spacing:0.00px;left:190.55px;top:1174.21px;transform:scaleX(1.070);">2025-12-12</span>
<span class="t" style="font-size:16.5px;color:#4ade80;left:339.48px;top:1173.43px;transform:scaleX(1.047);">BUY</span>
<span class="t" style="font-size:15px;color:#34d399;letter-spacing:0.51px;left:424.42px;top:1175.10px;transform:scaleX(1.070);">Market Buy</span>
<span class="t" style="font-size:15.2px;color:#eef2f0;letter-spacing:0.17px;font-family:var(--kr);left:559.04px;top:1174.62px;">한국바이오텍</span>
<span class="t" style="font-size:17px;color:#939e99;left:683.76px;top:1173.61px;transform:scaleX(1.063);">Korea Biotech</span>
<span class="t" style="font-size:17px;color:#939e99;left:842.99px;top:1174.21px;">-</span>
<span class="t" style="font-size:17px;color:#eef2f0;letter-spacing:0.02px;left:1036.92px;top:1174.21px;transform:scaleX(1.070);">37.3K</span>
<span class="t" style="font-size:17px;color:#eef2f0;left:1196.81px;top:1174.21px;transform:scaleX(1.067);">19.9M</span>
<span class="t" style="font-size:17px;color:#eef2f0;letter-spacing:0.48px;left:1313.75px;top:1172.21px;transform:scaleX(1.070);"><span class="w">₩</span>8,710 ($6)</span>
<span class="t" style="font-size:17px;color:#eef2f0;letter-spacing:0.45px;left:1461.15px;top:1172.21px;transform:scaleX(1.070);"><span class="w">₩</span>16,790 ($12)</span>
<span class="t" style="font-size:17px;color:#22c55e;letter-spacing:0.68px;-webkit-text-stroke:0.62px currentColor;left:1632.38px;top:1174.21px;transform:scaleX(1.070);">+92.8%</span>
<span class="t" style="font-size:17px;color:#eef2f0;letter-spacing:0.08px;left:1799.61px;top:1174.21px;transform:scaleX(1.070);">($224K)</span>
<span class="t" style="font-size:14.6px;color:#eef2f0;font-family:var(--kr);left:1781.16px;top:1175.45px;">억</span>
<span class="t" style="font-size:17px;color:#eef2f0;letter-spacing:0.15px;left:1756.94px;top:1172.21px;transform:scaleX(1.070);"><span class="w">₩</span>3</span>
<span class="t" style="font-size:17px;color:#eef2f0;letter-spacing:0.39px;left:49.45px;top:1219.61px;transform:scaleX(1.070);">2025-12-08</span>
<span class="t" style="font-size:17px;color:#939e99;letter-spacing:0.00px;left:190.55px;top:1219.61px;transform:scaleX(1.070);">2025-12-12</span>
<span class="t" style="font-size:16.5px;color:#4ade80;left:339.48px;top:1218.83px;transform:scaleX(1.047);">BUY</span>
<span class="t" style="font-size:15px;color:#34d399;letter-spacing:0.51px;left:424.42px;top:1220.50px;transform:scaleX(1.070);">Market Buy</span>
<span class="t" style="font-size:15.2px;color:#eef2f0;letter-spacing:0.17px;font-family:var(--kr);left:559.04px;top:1220.02px;">한국바이오텍</span>
<span class="t" style="font-size:17px;color:#939e99;left:683.76px;top:1219.01px;transform:scaleX(1.063);">Korea Biotech</span>
<span class="t" style="font-size:17px;color:#939e99;left:842.99px;top:1219.61px;">-</span>
<span class="t" style="font-size:17px;color:#eef2f0;letter-spacing:0.02px;left:1036.92px;top:1219.61px;transform:scaleX(1.070);">52.4K</span>
<span class="t" style="font-size:17px;color:#eef2f0;left:1196.81px;top:1219.61px;transform:scaleX(1.067);">19.9M</span>
<span class="t" style="font-size:17px;color:#eef2f0;letter-spacing:0.48px;left:1313.75px;top:1217.61px;transform:scaleX(1.070);"><span class="w">₩</span>8,690 ($6)</span>
<span class="t" style="font-size:17px;color:#eef2f0;letter-spacing:0.45px;left:1461.15px;top:1217.61px;transform:scaleX(1.070);"><span class="w">₩</span>16,790 ($12)</span>
<span class="t" style="font-size:17px;color:#22c55e;letter-spacing:0.68px;-webkit-text-stroke:0.62px currentColor;left:1632.38px;top:1219.61px;transform:scaleX(1.070);">+93.2%</span>
<span class="t" style="font-size:17px;color:#eef2f0;letter-spacing:0.08px;left:1799.61px;top:1219.61px;transform:scaleX(1.070);">($312K)</span>
<span class="t" style="font-size:14.6px;color:#eef2f0;font-family:var(--kr);left:1781.16px;top:1220.85px;">억</span>
<span class="t" style="font-size:17px;color:#eef2f0;letter-spacing:0.15px;left:1756.94px;top:1217.61px;transform:scaleX(1.070);"><span class="w">₩</span>5</span>
</section>
<div class="tip" role="tooltip"></div>
<div class="txt">
<span class="t" style="font-size:16px;color:#e4e4e7;letter-spacing:0.33px;-webkit-text-stroke:0.35px currentColor;left:245.19px;top:873.65px;transform:scaleX(1.070);">Open market purchase. Insider bought at market</span>
<span class="t" style="font-size:16px;color:#e4e4e7;letter-spacing:0.34px;-webkit-text-stroke:0.35px currentColor;left:245.19px;top:899.75px;transform:scaleX(1.070);">price with personal capital — strongest bullish signal.</span>
</div>
</body>
</html>
